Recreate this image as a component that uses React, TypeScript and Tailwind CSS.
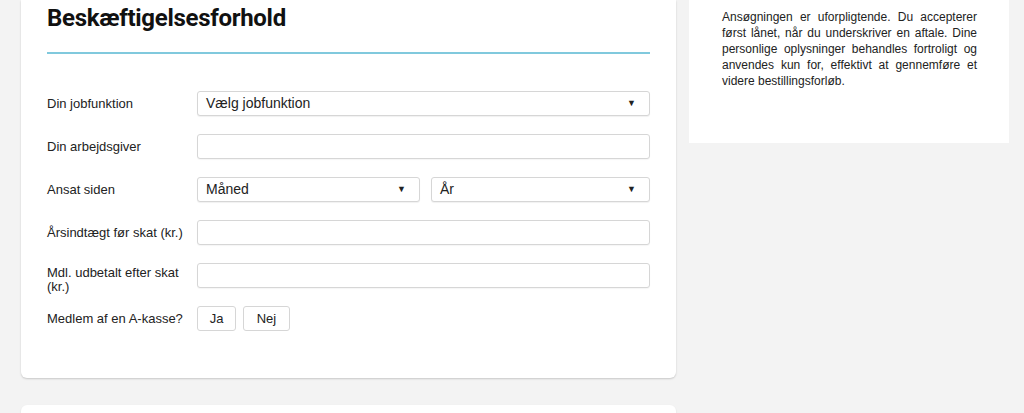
import React from 'react'

const font = { fontFamily: '"Liberation Sans", Arial, sans-serif' }

function Caret() {
    return <span className="text-[9px] leading-none text-[#222]">▼</span>
}

function Select({ label, className }: { label: string; className?: string }) {
    return (
        <div
            className={`h-[25px] flex items-center justify-between pl-[8px] pr-[13px] bg-white border border-[#d6d6d6] rounded-[3px] shadow-[0_1px_1px_rgba(0,0,0,0.06)] text-[14px] text-[#222] ${className ?? ''}`}
        >
            <span>{label}</span>
            <Caret />
        </div>
    )
}

function Input() {
    return <div className="h-[25px] w-[453px] bg-white border border-[#d6d6d6] rounded-[3px] shadow-[0_1px_1px_rgba(0,0,0,0.04)]" />
}

function Row({ label, children, top }: { label: React.ReactNode; children: React.ReactNode; top?: boolean }) {
    return (
        <div className={`h-[25px] flex ${top ? 'items-start' : 'items-center'}`}>
            <div className={`w-[150px] shrink-0 text-[13px] text-[#222] ${top ? 'pt-[3px] leading-[14px]' : ''}`}>{label}</div>
            {children}
        </div>
    )
}

export default function App() {
    return (
        <main className="w-full h-[413px] overflow-hidden bg-[#f3f3f3] flex gap-[13px] pl-[21px]" style={font}>
            <div className="w-[655px] shrink-0 flex flex-col">
                <section className="bg-white rounded-b-[6px] shadow-[0_1px_2px_rgba(0,0,0,0.18)] px-[26px] pb-[47px]">
                    <h2 className="h-[36px] leading-[36px] text-[24px] font-bold text-[#111] tracking-[-0.3px]" style={{ fontFamily: 'Roboto, sans-serif' }}>
                        Beskæftigelsesforhold
                    </h2>
                    <div className="mt-[16px] h-[2px] bg-[#80c9dd]" />
                    <div className="mt-[37px] flex flex-col gap-[18px]">
                        <Row label="Din jobfunktion">
                            <Select label="Vælg jobfunktion" className="w-[453px]" />
                        </Row>
                        <Row label="Din arbejdsgiver">
                            <Input />
                        </Row>
                        <Row label="Ansat siden">
                            <div className="flex gap-[11px]">
                                <Select label="Måned" className="w-[223px]" />
                                <Select label="År" className="w-[219px]" />
                            </div>
                        </Row>
                        <Row label="Årsindtægt før skat (kr.)">
                            <Input />
                        </Row>
                        <Row label={<>Mdl. udbetalt efter skat<br />(kr.)</>} top>
                            <Input />
                        </Row>
                        <Row label="Medlem af en A-kasse?">
                            <div className="flex gap-[7px] text-[13px] text-[#222]">
                                <button type="button" className="h-[25px] w-[39px] bg-white border border-[#d6d6d6] rounded-[3px]">Ja</button>
                                <button type="button" className="h-[25px] w-[47px] bg-white border border-[#d6d6d6] rounded-[3px]">Nej</button>
                            </div>
                        </Row>
                    </div>
                </section>
                <section className="mt-[27px] h-[60px] bg-white rounded-t-[6px] shadow-[0_1px_2px_rgba(0,0,0,0.1)]" />
            </div>
            <aside className="w-[320px] h-[143px] shrink-0 bg-white pt-[9px] pl-[33px] pr-[32px]">
                <p className="text-[12px] leading-[16px] text-[#222] text-justify">
                    Ansøgningen er uforpligtende. Du accepterer først lånet, når du underskriver en aftale. Dine personlige oplysninger behandles fortroligt og anvendes kun for, effektivt at gennemføre et videre bestillingsforløb.
                </p>
            </aside>
        </main>
    )
}
